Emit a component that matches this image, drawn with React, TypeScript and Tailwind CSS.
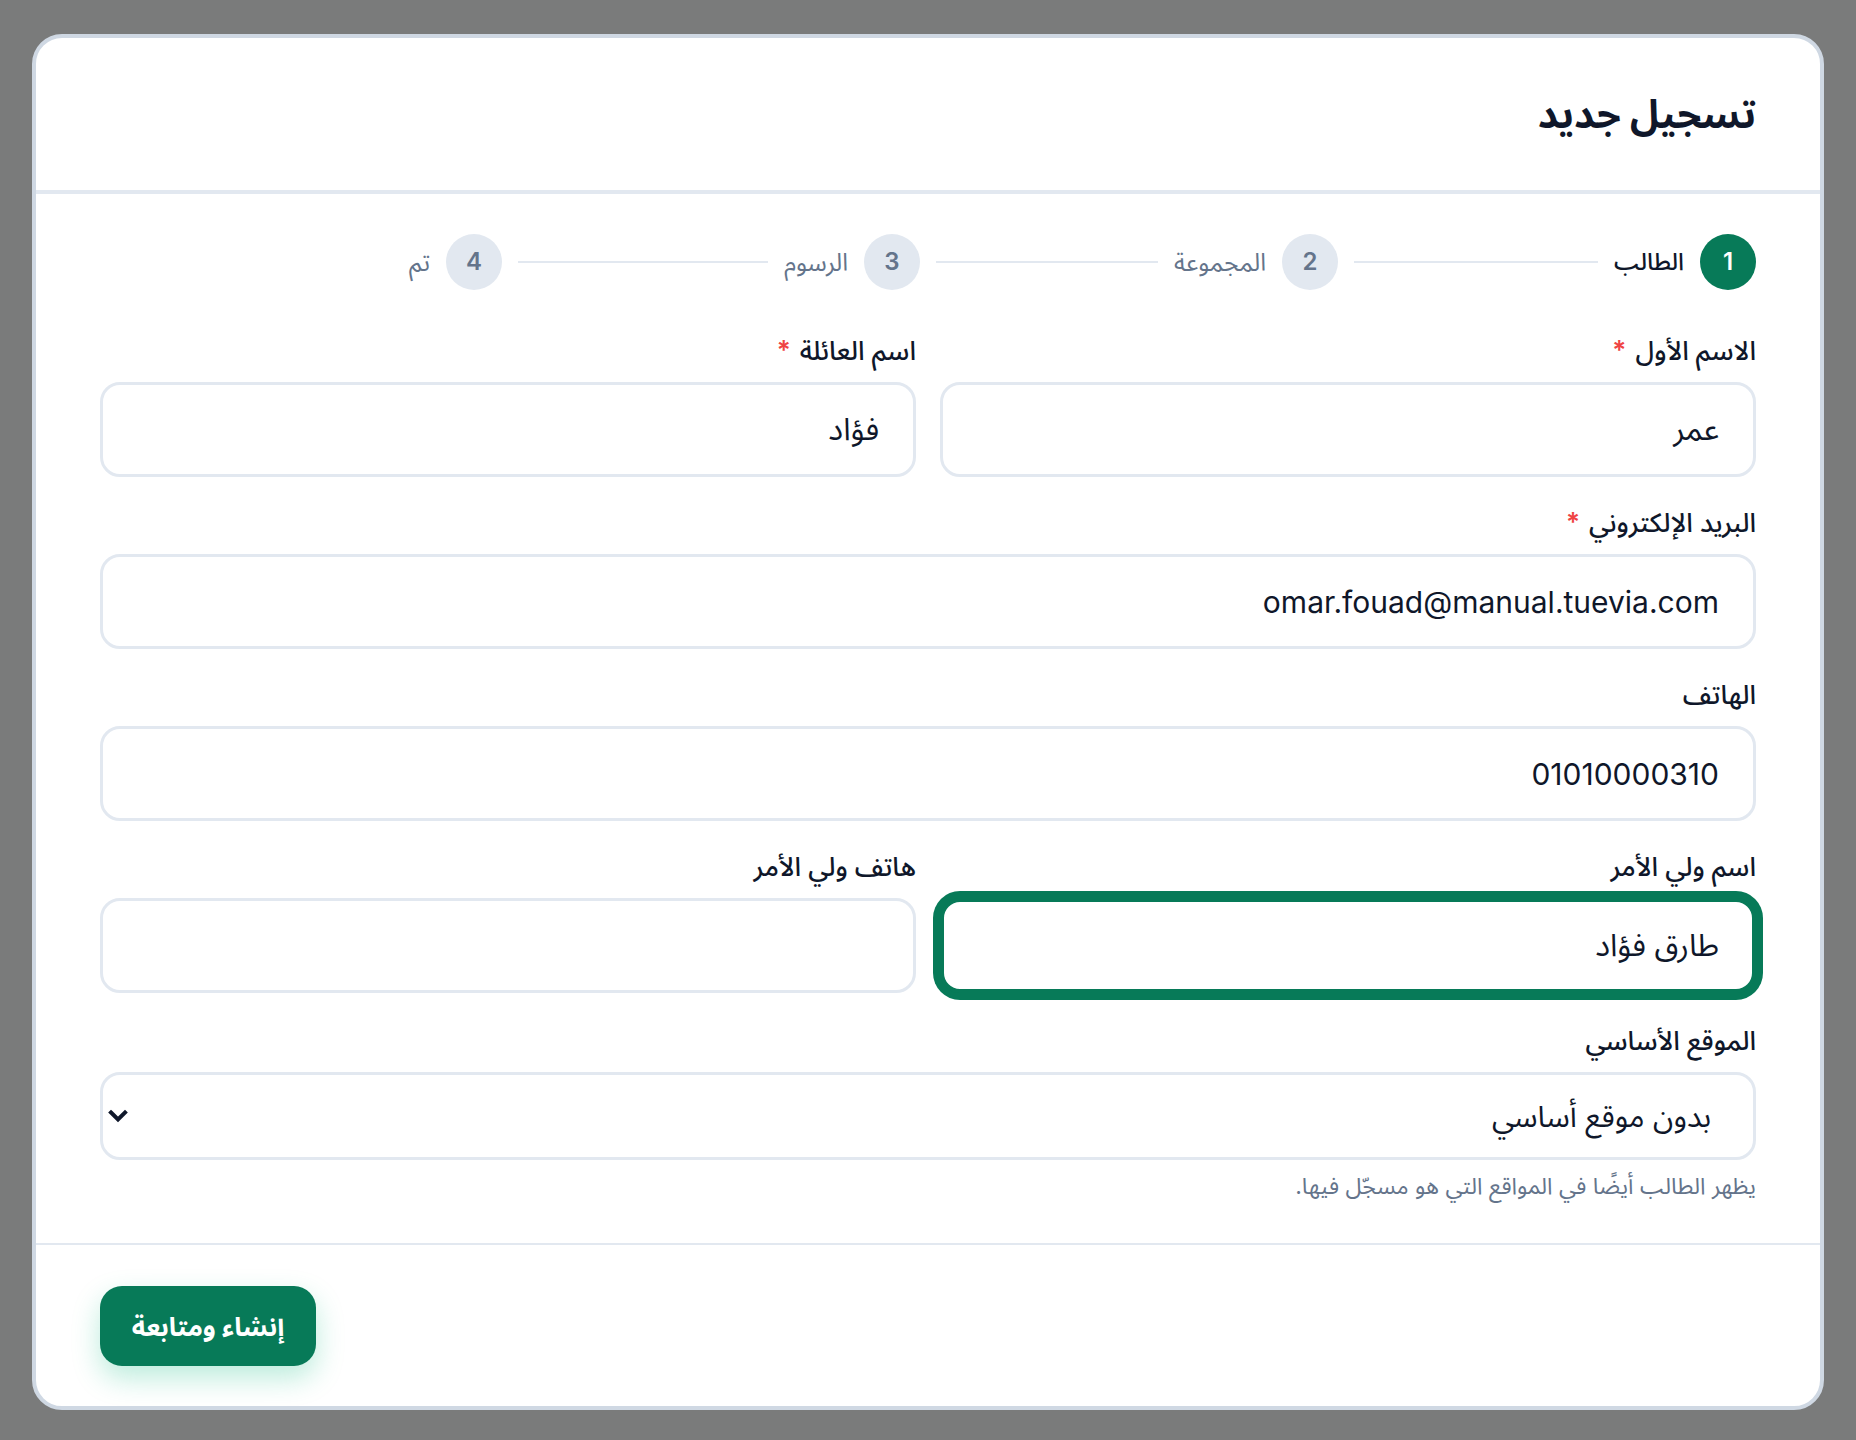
import React from "react";

const FONT = { fontFamily: 'Inter, "Noto Sans Arabic", "Noto Sans", "DejaVu Sans", sans-serif' };

function Step({ n, label, active, line }: { n: number; label: string; active?: boolean; line?: boolean }) {
  return (
    <div className={line ? "flex w-[418px] items-center gap-4 pl-4" : "flex items-center gap-4"}>
      <div
        className={
          active
            ? "flex h-[56px] w-[56px] shrink-0 items-center justify-center rounded-full bg-[#077a58] text-[24px] font-semibold text-white"
            : "flex h-[56px] w-[56px] shrink-0 items-center justify-center rounded-full bg-[#e2e8f0] text-[24px] font-semibold text-[#64748b]"
        }
      >
        {n}
      </div>
      <span className={active ? "whitespace-nowrap text-[24px] font-medium text-[#0f172a]" : "whitespace-nowrap text-[24.5px] text-[#64748b]"}>
        {label}
      </span>
      {line && <div className="h-[2px] flex-1 bg-[#e2e8f0]" />}
    </div>
  );
}

function Label({ text, required }: { text: string; required?: boolean }) {
  return (
    <div className="mb-[14px] flex h-[36px] items-center gap-[9px] text-[26.5px] font-medium leading-[36px] text-[#0f172a]">
      <span>{text}</span>
      {required && <span className="text-[26px] font-semibold leading-none text-[#ef4444]">*</span>}
    </div>
  );
}

function Field({ label, value, required, focused, size }: { label: string; value: string; required?: boolean; focused?: boolean; size?: "latin" }) {
  const text = size === "latin" ? " text-[30px]" : " text-[31px]";
  return (
    <div className="flex flex-col">
      <Label text={label} required={required} />
      <input
        readOnly
        value={value}
        className={
          (focused
            ? "h-[95px] w-full rounded-[20px] border-[4px] border-[#077a58] bg-white pr-[33px] pl-[33px] text-[#0f172a] outline-none ring-[7px] ring-[#077a58]"
            : "h-[95px] w-full rounded-[20px] border-[3px] border-[#e2e8f0] bg-white pr-[34px] pl-[34px] text-[#0f172a] outline-none") + text
        }
      />
    </div>
  );
}

export default function App() {
  return (
    <div className="min-h-[1440px] w-full bg-[#7a7b7b] px-[32px] pt-[34px] pb-[33px]" style={FONT}>
      <div dir="rtl" className="overflow-hidden rounded-[30px] border-[4px] border-[#cfd8e3] bg-white">
        <div className="flex h-[152px] items-center px-16">
          <h1 className="text-[39px] font-bold text-[#0f172a]">تسجيل جديد</h1>
        </div>
        <div className="h-[4px] bg-[#e2e8f0]" />
        <div className="px-16 pt-[40px] pb-[42px]">
          <div className="mb-[42px] flex items-center">
            <Step n={1} label="الطالب" active line />
            <Step n={2} label="المجموعة" line />
            <Step n={3} label="الرسوم" line />
            <Step n={4} label="تم" />
          </div>
          <div className="flex flex-col gap-[27px]">
            <div className="grid grid-cols-2 gap-6">
              <Field label="الاسم الأول" value="عمر" required />
              <Field label="اسم العائلة" value="فؤاد" required />
            </div>
            <Field label="البريد الإلكتروني" value="omar.fouad@manual.tuevia.com" required size="latin" />
            <Field label="الهاتف" value="01010000310" size="latin" />
            <div className="grid grid-cols-2 gap-6">
              <Field label="اسم ولي الأمر" value="طارق فؤاد" focused />
              <Field label="هاتف ولي الأمر" value="" />
            </div>
            <div className="mt-[2px] flex flex-col">
              <Label text="الموقع الأساسي" />
              <div className="flex h-[88px] items-center justify-between rounded-[20px] border-[3px] border-[#e2e8f0] bg-white pr-[42px] pl-[5px]">
                <span className="text-[30px] text-[#0f172a]">بدون موقع أساسي</span>
                <svg width="20" height="14" viewBox="0 0 20 14" fill="none">
                  <path d="M3 3.5 L10 10.5 L17 3.5" stroke="#0f172a" strokeWidth="4" strokeLinecap="square" />
                </svg>
              </div>
              <p className="mt-[11px] text-[23px] leading-[30px] text-[#64748b]">يظهر الطالب أيضًا في المواقع التي هو مسجّل فيها.</p>
            </div>
          </div>
        </div>
        <div className="h-[2px] bg-[#e2e8f0]" />
        <div className="flex justify-end px-16 pt-[41px] pb-[40px]">
          <button className="flex h-[80px] w-[216px] items-center justify-center rounded-[22px] bg-[#077a58] text-[26px] font-bold text-white shadow-[0_12px_28px_rgba(16,185,129,0.28)]">
            إنشاء ومتابعة
          </button>
        </div>
      </div>
    </div>
  );
}
